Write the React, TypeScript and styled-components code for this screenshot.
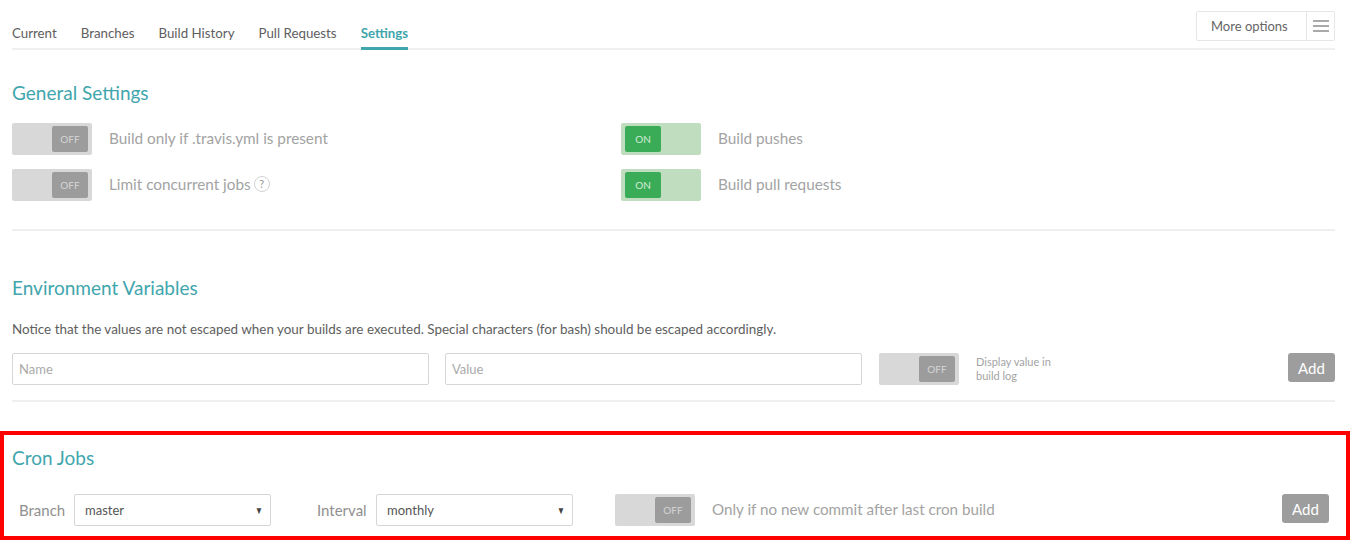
import React from 'react';
import styled, { createGlobalStyle } from 'styled-components';

const teal = '#3fa6ad';

const GlobalStyle = createGlobalStyle`
  body {
    margin: 0;
    background: #fff;
    font-family: Lato, 'Liberation Sans', sans-serif;
  }
  * { box-sizing: border-box; }
`;

const Page = styled.div`
  width: 1350px;
  height: 540px;
  overflow: hidden;
`;

const Content = styled.div`
  padding: 0 15px 0 12px;
`;

const Header = styled.div`
  display: flex;
  justify-content: space-between;
  align-items: flex-start;
  height: 50px;
  border-bottom: 2px solid #efefef;
`;

const Tabs = styled.nav`
  display: flex;
  gap: 24px;
  padding-top: 24px;
`;

const Tab = styled.a<{ $active?: boolean }>`
  display: block;
  font-size: 13.3px;
  line-height: 18px;
  padding-bottom: 5px;
  color: ${p => (p.$active ? teal : '#5e5e5e')};
  font-weight: ${p => (p.$active ? 700 : 400)};
  border-bottom: 3px solid ${p => (p.$active ? teal : 'transparent')};
`;

const MoreOptions = styled.div`
  display: flex;
  margin-top: 11px;
  height: 30px;
  border: 1px solid #e6e6e6;
  border-radius: 2px;
`;

const MoreLabel = styled.span`
  display: flex;
  align-items: center;
  padding: 0 14px;
  font-size: 13px;
  color: #666;
  border-right: 1px solid #e6e6e6;
  width: 110px;
`;

const Burger = styled.span`
  display: flex;
  flex-direction: column;
  justify-content: center;
  gap: 3.5px;
  width: 27px;
  padding: 0 5px 0 6px;
  span {
    display: block;
    height: 1.5px;
    background: #a9a9a9;
  }
`;

const Section = styled.section<{ $top: number }>`
  margin-top: ${p => p.$top}px;
`;

const Heading = styled.h2`
  margin: 0;
  font-size: 19px;
  line-height: 24px;
  font-weight: 400;
  color: ${teal};
`;

const SettingsGrid = styled.div`
  display: grid;
  grid-template-columns: 609px 1fr;
  row-gap: 14px;
  margin-top: 18px;
`;

const SettingRow = styled.div`
  display: flex;
  align-items: center;
  gap: 17px;
`;

const Label = styled.span`
  display: flex;
  align-items: center;
  gap: 3px;
  font-size: 15.3px;
  line-height: 18px;
  color: #a3a3a3;
  padding-bottom: 2px;
`;

const Help = styled.span`
  display: inline-flex;
  align-items: center;
  justify-content: center;
  width: 16px;
  height: 16px;
  border: 1px solid #d2d2d2;
  border-radius: 50%;
  font-size: 11px;
  color: #999;
`;

const ToggleTrack = styled.div<{ $on?: boolean }>`
  display: flex;
  flex: none;
  justify-content: ${p => (p.$on ? 'flex-start' : 'flex-end')};
  width: 80px;
  height: 32px;
  padding: 3px 4px;
  border-radius: 2px;
  background: ${p => (p.$on ? '#c0ddbf' : '#d8d8d8')};
`;

const ToggleKnob = styled.span<{ $on?: boolean }>`
  display: flex;
  align-items: center;
  justify-content: center;
  width: 36px;
  height: 26px;
  border-radius: 2px;
  font-size: 10px;
  background: ${p => (p.$on ? '#3aab56' : '#9c9c9c')};
  color: ${p => (p.$on ? '#d4ecd9' : '#d6d6d6')};
`;

const Toggle = ({ on }: { on?: boolean }) => (
  <ToggleTrack $on={on}>
    <ToggleKnob $on={on}>{on ? 'ON' : 'OFF'}</ToggleKnob>
  </ToggleTrack>
);

const Divider = styled.hr<{ $top: number }>`
  margin: ${p => p.$top}px 0 0;
  border: 0;
  border-top: 2px solid #efefef;
`;

const Notice = styled.p`
  margin: 20px 0 0;
  font-size: 13.45px;
  line-height: 18px;
  color: #5e5e5e;
`;

const EnvRow = styled.div`
  display: flex;
  align-items: flex-start;
  margin-top: 15px;
`;

const TextInput = styled.input<{ $gap: number }>`
  width: 417px;
  height: 32px;
  margin-right: ${p => p.$gap}px;
  padding: 0 6px;
  border: 1px solid #d6d6d6;
  border-radius: 2px;
  font-family: inherit;
  font-size: 13px;
  &::placeholder { color: #aaa; }
`;

const SmallNote = styled.span`
  margin-left: 17px;
  width: 90px;
  font-size: 11px;
  line-height: 14px;
  color: #a3a3a3;
  padding-top: 2px;
`;

const AddButton = styled.button`
  margin-left: auto;
  width: 47px;
  height: 29px;
  border: 0;
  border-radius: 3px;
  background: #9d9d9d;
  color: #fff;
  font-family: inherit;
  font-size: 15px;
`;

const CronBox = styled.section`
  margin-top: 29px;
  height: 110px;
  border: 4px solid #ff0000;
  border-bottom-width: 5px;
  padding: 11px 17px 0 8px;
`;

const CronRow = styled.div`
  display: flex;
  align-items: flex-start;
  margin-top: 24px;
`;

const FieldLabel = styled.span<{ $width: number; $indent: number }>`
  width: ${p => p.$width}px;
  padding-left: ${p => p.$indent}px;
  font-size: 15px;
  line-height: 33px;
  color: #8f8f8f;
`;

const SelectBox = styled.div<{ $gap: number }>`
  display: flex;
  align-items: center;
  justify-content: space-between;
  width: 197px;
  height: 32px;
  margin-right: ${p => p.$gap}px;
  padding: 0 6px 0 10px;
  border: 1px solid #d6d6d6;
  border-radius: 2px;
  font-size: 13px;
  color: #555;
`;

const Caret = styled.span`
  font-size: 10px;
  color: #444;
  transform: scaleX(0.8);
`;

const CronNote = styled.span`
  margin-left: 17px;
  font-size: 15.2px;
  line-height: 31px;
  color: #a3a3a3;
`;

export default function App() {
  return (
    <Page>
      <GlobalStyle />
      <Content>
        <Header>
          <Tabs>
            <Tab>Current</Tab>
            <Tab>Branches</Tab>
            <Tab>Build History</Tab>
            <Tab>Pull Requests</Tab>
            <Tab $active>Settings</Tab>
          </Tabs>
          <MoreOptions>
            <MoreLabel>More options</MoreLabel>
            <Burger>
              <span />
              <span />
              <span />
            </Burger>
          </MoreOptions>
        </Header>

        <Section $top={31}>
          <Heading>General Settings</Heading>
          <SettingsGrid>
            <SettingRow>
              <Toggle />
              <Label>Build only if .travis.yml is present</Label>
            </SettingRow>
            <SettingRow>
              <Toggle on />
              <Label>Build pushes</Label>
            </SettingRow>
            <SettingRow>
              <Toggle />
              <Label>
                Limit concurrent jobs<Help>?</Help>
              </Label>
            </SettingRow>
            <SettingRow>
              <Toggle on />
              <Label>Build pull requests</Label>
            </SettingRow>
          </SettingsGrid>
        </Section>
        <Divider $top={28} />

        <Section $top={45}>
          <Heading>Environment Variables</Heading>
          <Notice>
            Notice that the values are not escaped when your builds are executed. Special characters (for bash) should be
            escaped accordingly.
          </Notice>
          <EnvRow>
            <TextInput placeholder="Name" $gap={16} />
            <TextInput placeholder="Value" $gap={17} />
            <Toggle />
            <SmallNote>
              Display value in
              <br />
              build log
            </SmallNote>
            <AddButton>Add</AddButton>
          </EnvRow>
        </Section>
        <Divider $top={15} />
      </Content>

      <CronBox>
        <Heading>Cron Jobs</Heading>
        <CronRow>
          <FieldLabel $width={62} $indent={7}>
            Branch
          </FieldLabel>
          <SelectBox $gap={46}>
            master
            <Caret>▼</Caret>
          </SelectBox>
          <FieldLabel $width={59} $indent={0}>
            Interval
          </FieldLabel>
          <SelectBox $gap={42}>
            monthly
            <Caret>▼</Caret>
          </SelectBox>
          <Toggle />
          <CronNote>Only if no new commit after last cron build</CronNote>
          <AddButton>Add</AddButton>
        </CronRow>
      </CronBox>
    </Page>
  );
}
